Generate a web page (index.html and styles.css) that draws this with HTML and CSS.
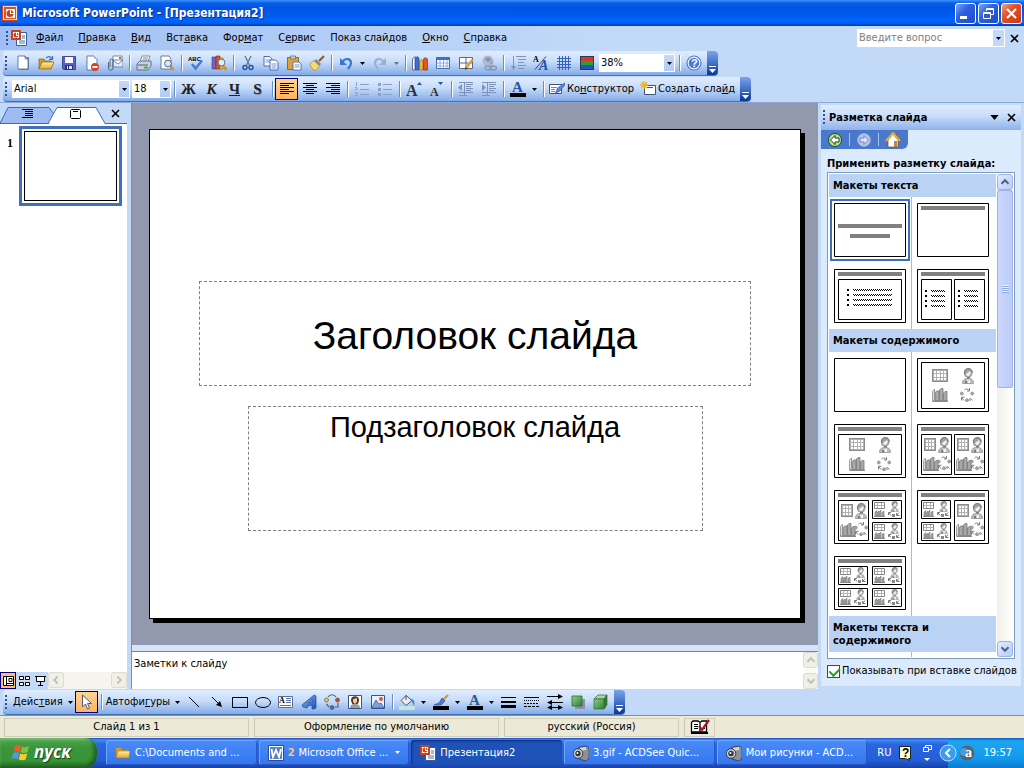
FILE: index.html
```html
<!DOCTYPE html>
<html lang="ru">
<head>
<meta charset="utf-8">
<title>Microsoft PowerPoint - [Презентация2]</title>
<link rel="stylesheet" href="styles.css">
</head>
<body>
<svg class="defs" aria-hidden="true">
  <defs>
    <linearGradient id="gGreen" x1="0" y1="0" x2="1" y2="1"><stop offset="0" stop-color="#8fd08a"/><stop offset="1" stop-color="#2f7d35"/></linearGradient>
    <linearGradient id="gFolder" x1="0" y1="0" x2="0" y2="1"><stop offset="0" stop-color="#fff0a0"/><stop offset="1" stop-color="#e0a52c"/></linearGradient>
    <linearGradient id="gBlue" x1="0" y1="0" x2="1" y2="1"><stop offset="0" stop-color="#8fb4f5"/><stop offset="1" stop-color="#1a4fb5"/></linearGradient>
    <symbol id="ppt" viewBox="0 0 16 16"><path fill="#c8421c" d="M0 0h16v16H0z"/><path fill="#f7d9cc" d="M1 1h14v14H1z"/><path fill="#d4552c" d="M2 2h12v12H2z"/><path fill="#fff" d="M4 4h9v9H4z"/><circle cx="8" cy="8.500" r="3.500" fill="#c8421c"/><path fill="#fff" d="M8 5h1v3h3v1H8z"/></symbol>
    <symbol id="pptdoc" viewBox="0 0 16 16"><path fill="#fff" stroke="#3b5c94" d="M5.500 2.500h10v13h-10z"/><path stroke="#4a70b5" d="M11 6h3M11 8h3M8 11h6M8 13h6"/><path fill="#c8421c" d="M0 0h10v10H0z"/><path fill="#fff" d="M2 2h6v6H2z"/><circle cx="5" cy="5" r="2.500" fill="#c8421c"/><path fill="#fff" d="M5 2h1v3h2v1H5z"/></symbol>
    <symbol id="new" viewBox="0 0 16 16"><path fill="#7286a8" d="M4 2h10v13H4z"/><path fill="#fff" stroke="#4a628c" stroke-width=".8" d="M3 1h7l3 3v10H3z"/><path fill="#a9c3ea" stroke="#4a628c" stroke-width=".6" d="M10 1v3h3z"/></symbol>
    <symbol id="open" viewBox="0 0 16 16"><path fill="#d49a2a" stroke="#8a5f12" stroke-width=".7" d="M1 14V4h5l1 2h6v2"/><path fill="url(#gFolder)" stroke="#8a5f12" stroke-width=".7" d="M1 14 4 7h12l-3 7z"/><path fill="none" stroke="#3d6fc4" stroke-width="1.300" d="M8 3c2-2 4-2 6 1M14.500 1v3.300H11"/></symbol>
    <symbol id="save" viewBox="0 0 16 16"><path fill="#5a62c0" stroke="#2c327e" stroke-width=".8" d="M1.500 1.500h13v13h-12l-1-1z"/><path fill="#f3f5ff" d="M4 2h8v6H4z"/><path fill="#2c327e" d="M4 10h8v5H4z"/><path fill="#dfe4fa" d="M6 11h5v3H6z"/><path fill="#2c327e" d="M7 11h1v3H7z"/></symbol>
    <symbol id="perm" viewBox="0 0 16 16"><path fill="#fff" stroke="#4a628c" stroke-width=".8" d="M3 1h7l3 3v11H3z"/><path fill="#a9c3ea" d="M10 1v3h3z"/><circle cx="11" cy="12" r="4" fill="#d9401f"/><path fill="#fff" d="M8.500 11h5v2h-5z"/></symbol>
    <symbol id="mail" viewBox="0 0 16 16"><path fill="#fff" stroke="#5a6f98" stroke-width=".8" d="M6 1h9v10H6z"/><path fill="#dce8fb" stroke="#5a6f98" stroke-width=".8" d="M6 5h10v7H6zM6 5l5 4 5-4"/><path fill="#d9603c" d="M12 2h2v2h-2z"/><path fill="none" stroke="#5c6780" d="M1.500 7v6a2 2 0 0 0 4.500 0V5.500a1.500 1.500 0 0 0-3 0V12"/></symbol>
    <symbol id="print" viewBox="0 0 16 16"><path fill="#fff" stroke="#6a7591" stroke-width=".8" d="M6 1h8l-2 6H4z"/><path fill="#c9cfdc" stroke="#4f5870" stroke-width=".8" d="M1 9l3-3h11v5l-3 4H1z"/><path fill="#8f98ab" d="M1 9h11v2H1z"/><path fill="#44b52e" d="M8 11.500h4v2H8z"/><path stroke="#7a87a3" d="M7 3h5M6.500 5h5"/></symbol>
    <symbol id="preview" viewBox="0 0 16 16"><path fill="#fff" stroke="#4a628c" stroke-width=".8" d="M2 1h8l2 3v10H2z"/><path stroke="#d48a28" stroke-width="2.200" d="m11.500 11 3 4"/><circle cx="9" cy="8.500" r="3.400" fill="#d5e6fb" stroke="#59657c"/></symbol>
    <symbol id="spell" viewBox="0 0 16 16"><text x="0" y="6" class="tiny">ABC</text><path fill="none" stroke="#4b7bd2" stroke-width="2.500" d="m4 9 3.500 4.500L14 5.500"/></symbol>
    <symbol id="research" viewBox="0 0 16 16"><path fill="#7a62b8" stroke="#473780" stroke-width=".6" d="M1 2h4v12H1z"/><path fill="#c2574a" stroke="#7a2b20" stroke-width=".6" d="M5 1h4v13H5z"/><path fill="#e6c55a" stroke="#8a6a12" stroke-width=".6" d="M9 3h3v11H9z"/><path stroke="#d48a28" stroke-width="2.200" d="m12.500 11 3 4"/><circle cx="10.500" cy="7.500" r="3.400" fill="#e3effc" stroke="#6d6d77"/></symbol>
    <symbol id="cut" viewBox="0 0 16 16"><path fill="none" stroke="#6c7c99" stroke-width="1.400" d="M5 1l4.500 9M11 1 6.500 10"/><circle cx="5" cy="12.500" r="2" fill="none" stroke="#2d57a8" stroke-width="1.500"/><circle cx="11" cy="12.500" r="2" fill="none" stroke="#2d57a8" stroke-width="1.500"/></symbol>
    <symbol id="copy" viewBox="0 0 16 16"><path fill="#fff" stroke="#3c5fa5" stroke-width=".9" d="M1 1.500h5.500L9 4v7H1z"/><path stroke="#6d93d8" d="M2.500 5h5M2.500 7h5"/><path fill="#fff" stroke="#3c5fa5" stroke-width=".9" d="M7 5h5.500L15 7.500V15H7z"/><path stroke="#6d93d8" d="M8.500 9h5M8.500 11h5M8.500 13h5"/></symbol>
    <symbol id="paste" viewBox="0 0 16 16"><path fill="#e0a236" stroke="#7c5512" stroke-width=".8" d="M1.500 2.500h11v12h-11z"/><path fill="#c8ccd4" stroke="#5b6472" stroke-width=".7" d="M4.500 1h5v3h-5z"/><path fill="#fff" stroke="#3c5fa5" stroke-width=".8" d="M7 7h6l2 2v6H7z"/><path stroke="#6d93d8" d="M8.500 10h5M8.500 12h5"/></symbol>
    <symbol id="brush" viewBox="0 0 16 16"><path stroke="#8a5b27" stroke-width="2.200" d="m10 6 5-5"/><path fill="#7d859a" d="m7 4 5 5-2 2-6-4z"/><path fill="#f3dc6c" stroke="#a5852a" stroke-width=".7" d="M5 5.500 10.500 11 7 15.500C4 15 1 12 1 8.500z"/></symbol>
    <symbol id="undo" viewBox="0 0 16 16"><path fill="none" stroke="#3e74d4" stroke-width="2.200" d="M4 7c4-5 9-3 9 1 0 3-2 4-3 6"/><path fill="#3e74d4" d="M2 3v7h7z"/></symbol>
    <symbol id="redo" viewBox="0 0 16 16"><path fill="none" stroke="#9db0d2" stroke-width="2.200" d="M12 7C8 2 3 4 3 8c0 3 2 4 3 6"/><path fill="#9db0d2" d="M14 3v7H7z"/></symbol>
    <symbol id="chart" viewBox="0 0 16 16"><path fill="#fff" stroke="#40527c" stroke-width=".8" d="M.5 4 3 1.500V15H.5z"/><path fill="#3f6fd0" stroke="#22407e" stroke-width=".6" d="M3.500 3 5 1.500 7 3v12H3.500z"/><path fill="#f0b62c" stroke="#8a5f12" stroke-width=".6" d="M7.500 6 9 4.500 11 6v9H7.500z"/><path fill="#e2552c" stroke="#7d2410" stroke-width=".6" d="M11.500 4 13 2.500 15.500 4v11h-4z"/></symbol>
    <symbol id="table" viewBox="0 0 16 16"><path fill="#fff" stroke="#3c64b0" d="M1.500 2.500h13v11h-13z"/><path fill="#3c6fd0" d="M1 2h14v3H1z"/><path stroke="#7c9ad6" stroke-width=".8" d="M5 5v9M8.500 5v9M12 5v9M1 8h14M1 11h14"/></symbol>
    <symbol id="borders" viewBox="0 0 16 16"><path fill="#fff" stroke="#5a6684" d="M1.500 2.500h13v11h-13z"/><path stroke="#5a6684" d="M8 2v12M1 8h14"/><path stroke="#e4a038" stroke-width="2.600" d="m14.500 4.500-6 8"/><path fill="#483010" d="m7 15 .5-3 2 1.500z"/></symbol>
    <symbol id="link" viewBox="0 0 16 16"><circle cx="7" cy="6" r="5.500" fill="#b0bbd0"/><path fill="#8797b5" d="M4 3l4-1 2 3-2 2-3-1zM9 8l3-2-1 4z"/><ellipse cx="7.500" cy="13" rx="3.500" ry="2" fill="none" stroke="#8797b5" stroke-width="1.300"/><ellipse cx="12" cy="13" rx="3.500" ry="2" fill="none" stroke="#8797b5" stroke-width="1.300"/></symbol>
    <symbol id="expand" viewBox="0 0 16 16"><path stroke="#8295b8" d="M3.500 1v12M6 1.500h10M8 4.500h8M8 7.500h6M8 10.500h8M8 13.500h6"/><path fill="#8295b8" d="M1 11h5l-2.500 4z"/></symbol>
    <symbol id="format" viewBox="0 0 16 16"><text x="0" y="7" class="glyph7">A</text><text x="6" y="15" class="glyphA">A</text><path stroke="#38456a" d="M2 14.500 13 1.500"/></symbol>
    <symbol id="grid" viewBox="0 0 16 16"><path stroke="#3460c0" stroke-width="1" d="M3.500 1v14M6.500 1v14M9.500 1v14M12.500 1v14M1 3.500h14M1 6.500h14M1 9.500h14M1 12.500h14"/></symbol>
    <symbol id="colors" viewBox="0 0 16 16"><path fill="#24386c" d="M1 1h14v14H1z"/><path fill="#e33322" d="M2 2h12v4H2z"/><path fill="#20a435" d="M2 6h12v4H2z"/><path fill="#2450c0" d="M2 10h12v4H2z"/></symbol>
    <symbol id="help" viewBox="0 0 16 16"><circle cx="8" cy="8" r="7" fill="#fff" stroke="#4a7ad8" stroke-width="1.200"/><circle cx="8" cy="8" r="5.300" fill="#4a7ad8"/><text x="5" y="12" class="qmark">?</text></symbol>
    <symbol id="al" viewBox="0 0 16 16"><path stroke="#000" d="M1 2.500h14M1 4.500h9M1 6.500h14M1 8.500h9M1 10.500h14M1 12.500h9"/></symbol>
    <symbol id="ac" viewBox="0 0 16 16"><path stroke="#000" d="M1 2.500h14M4 4.500h8M1 6.500h14M4 8.500h8M1 10.500h14M4 12.500h8"/></symbol>
    <symbol id="ar" viewBox="0 0 16 16"><path stroke="#000" d="M1 2.500h14M6 4.500h9M1 6.500h14M6 8.500h9M1 10.500h14M6 12.500h9"/></symbol>
    <symbol id="nums" viewBox="0 0 16 16"><path fill="none" stroke="#8fa0c0" d="M6 3.500h9M6 8.500h9M6 13.500h9M2.500 1v4M1 6.500h2v2H1M1 11.500h2v3H1"/></symbol>
    <symbol id="bullets" viewBox="0 0 16 16"><path stroke="#8fa0c0" d="M6 3.500h9M6 8.500h9M6 13.500h9"/><path fill="#8fa0c0" d="M1 2h3v3H1zM1 7h3v3H1zM1 12h3v3H1z"/></symbol>
    <symbol id="bigA" viewBox="0 0 16 16"><text x="0" y="15" class="serif16">A</text><path fill="#2450a8" d="M11 4l2.500-3L16 4z"/></symbol>
    <symbol id="smallA" viewBox="0 0 16 16"><text x="1" y="15" class="serif12">A</text><path fill="#2450a8" d="M9 1h5l-2.500 3z"/></symbol>
    <symbol id="outdent" viewBox="0 0 16 16"><path stroke="#7f93ba" d="M1 1.500h14M8 3.500h7M8 5.500h5M8 7.500h7M8 9.500h5M1 11.500h14M6.500 1v14M1 14.500h8"/><path fill="#7f93ba" d="M0 6.500 4 3v7z"/></symbol>
    <symbol id="indent" viewBox="0 0 16 16"><path stroke="#7f93ba" d="M1 1.500h14M8 3.500h7M8 5.500h5M8 7.500h7M8 9.500h5M1 11.500h14M6.500 1v14M1 14.500h8"/><path fill="#7f93ba" d="M5 6.500 1 3v7z"/></symbol>
    <symbol id="fontcolor" viewBox="0 0 16 16"><text x="2" y="11" class="serifBlue">A</text><path d="M0 12h16v4H0z"/></symbol>
    <symbol id="design" viewBox="0 0 16 16"><path fill="#fff" stroke="#40527c" d="M.5 3.500h12v9H.5z"/><path stroke="#7088b8" d="M2 6.500h6M2 8.500h4M2 10.500h4"/><path fill="#5a8ae0" stroke="#274a94" stroke-width=".6" d="m15.500 2-7 5-2 5 4-1.500 5-6z"/></symbol>
    <symbol id="newslide" viewBox="0 0 16 16"><path fill="#fff" stroke="#40527c" d="M4.500 4.500h11v9h-11z"/><path stroke="#40527c" d="M7 6.500h6"/><path stroke="#eeb91e" stroke-width="1.300" d="M4 0v8M0 4h8M1 1l6 6M7 1 1 7"/></symbol>
    <symbol id="person" viewBox="0 0 12 16"><path fill="#a0a0a0" d="M2 5c0-6.500 8.500-6 8.500-.5C10.500 8 9 9.500 6 9.500S2 8 2 5z"/><path fill="none" stroke="#6e6e6e" d="M2.500 6C2 1 5 .5 7 .7c2.500.3 3.500 2 3 4.300"/><path fill="#f0f0f0" d="m4 6 4-3 1 2-2 3H5z"/><path fill="#bcbcbc" stroke="#8c8c8c" stroke-width=".7" d="M.5 15.500c0-4 2-5 5.500-5s5.500 1 5.500 5z"/><path fill="#f4f4f4" d="m5 11 1.500 1.500L8 11v4H6z"/><path fill="#7c7c7c" d="M3 13h2v2.500H3zM5 9h3v1.500H5z"/></symbol>
    <symbol id="gtable" viewBox="0 0 16 13"><path fill="#8c8c8c" d="M0 0h16v13H0z"/><path fill="#b0b0b0" d="M1 1h14v11H1z"/><path fill="#fff" d="M2 2h2v2H2zM5 2h3v2H5zM9 2h2v2H9zM12 2h2v2h-2zM2 5h2v3H2zM5 5h3v3H5zM9 5h2v3H9zM12 5h2v3h-2zM2 9h2v2H2zM5 9h3v2H5zM9 9h2v2H9zM12 9h2v2h-2z"/></symbol>
    <symbol id="gtablen" viewBox="0 0 12 13"><path fill="#8c8c8c" d="M0 0h12v13H0z"/><path fill="#b0b0b0" d="M1 1h10v11H1z"/><path fill="#fff" d="M2 2h2v2H2zM5 2h2v2H5zM8 2h2v2H8zM2 5h2v3H2zM5 5h2v3H5zM8 5h2v3H8zM2 9h2v2H2zM5 9h2v2H5zM8 9h2v2H8z"/></symbol>
    <symbol id="gchart" viewBox="0 0 16 14"><path fill="#e0e0e0" stroke="#8a8a8a" stroke-width=".8" d="M.5 3.500 2.500 1v11l-2 1.500z"/><path fill="#a8a8a8" stroke="#787878" stroke-width=".8" d="M3 5l1.500-2H7v9.500H3zM7.500 2 9 .5h2v12H7.500zM11.500 5 13 3.500h2v9h-3.500z"/><path fill="#888" d="M1 12.500h15V14H1z"/></symbol>
    <symbol id="gdiag" viewBox="0 0 14 14"><g fill="#a8a8a8" stroke="#808080" stroke-width=".6"><circle cx="1.800" cy="5.500" r="1.500"/><circle cx="12.200" cy="5.500" r="1.500"/><circle cx="7" cy="12.200" r="1.500"/></g><path fill="none" stroke="#707070" stroke-width=".9" d="M4.500 2C6 .5 7.500.8 9 2.500M9.500 0v3H7M12.500 12.500l-2-2M10 13v-3M1.500 12.500V9.300h3M2 10l2 2.500"/></symbol>
    <symbol id="quad" viewBox="0 0 48 36"><use href="#gtable" x="1" y="1" width="16" height="13"/><use href="#person" x="31" y="0" width="12" height="16"/><use href="#gchart" x="1" y="20" width="16" height="14"/><use href="#gdiag" x="29" y="20" width="14" height="14"/></symbol>
    <symbol id="tall" viewBox="0 0 31 41"><path fill="#fff" stroke="#000" d="M.5.5h30v40H.5z"/><use href="#gtablen" x="3" y="4" width="12" height="13"/><use href="#person" x="17" y="3" width="12" height="16"/><use href="#gchart" x="2" y="23" width="16" height="14"/><use href="#gdiag" x="16" y="22" width="14" height="14"/></symbol>
    <symbol id="small" viewBox="0 0 30 19"><path fill="#fff" stroke="#000" d="M.5.5h29v18H.5z"/><path fill="none" stroke="#858585" d="M2.500 2.500h10v6h-10z"/><path stroke="#b4b4b4" d="M5.500 3v5M9.500 3v5M3 5.500h9"/><path fill="#a4a4a4" stroke="#787878" stroke-width=".6" d="M3 12l2-1.500V16H3zM5.500 12.500 7 11v5H5.500zM7.500 11.500 9 10v6H7.500zM10 12.500l2-1.500v5h-2z"/><path fill="#888" d="M2 16h11v1H2z"/><use href="#person" x="18" y="1" width="9" height="11"/><path fill="none" stroke="#777" d="M16.500 15v-2.500H19M17 13l2 2.500M27 12.500l-2 2.500M24.500 13v2.500h3"/><path fill="#888" d="M20 14h3v3h-3z"/></symbol>
    <symbol id="frame" viewBox="0 0 72 54"><path fill="#fff" stroke="#000" d="M.5.5h71v53H.5z"/></symbol>
    <symbol id="framed" viewBox="0 0 72 54"><use href="#frame" width="72" height="54"/><path fill="#808080" d="M4 3h64v4H4z"/></symbol>
    <symbol id="diag" viewBox="0 0 16 16"><g stroke="#333" stroke-width=".5"><circle cx="2.500" cy="6" r="2" fill="#f0c848"/><circle cx="13.500" cy="6" r="2" fill="#d84828"/><circle cx="8" cy="13.500" r="2" fill="#4870d0"/></g><path fill="none" stroke="#506080" stroke-width="1.200" d="M4 3c2-3 6-3 8 0M14 9v4h-3M5 13 2.500 10"/></symbol>
    <symbol id="down" viewBox="0 0 5 3"><path d="M0 0h5L2.500 3z"/></symbol>
    <symbol id="x" viewBox="0 0 9 9"><path stroke="#000" stroke-width="1.700" d="m1 1 7 7M8 1 1 8"/></symbol>
    <symbol id="chev" viewBox="0 0 16 16"><path fill="none" stroke="currentColor" stroke-width="2.300" d="m4 10 4-4 4 4"/></symbol>
    <symbol id="acd" viewBox="0 0 16 16"><path fill="#8c9098" stroke="#222" stroke-width=".6" d="m6 2 8-1 2 2v10l-3 3-7-2z"/><path fill="#d4d8de" d="m7 3 6-1v3L7 6z"/><circle cx="5" cy="8.500" r="4.800" fill="#c6cad0" stroke="#222" stroke-width=".8"/><circle cx="5" cy="8.500" r="2.700" fill="#333"/><circle cx="4.500" cy="8" r="1" fill="#fff"/></symbol>
  </defs>
</svg>

<header class="titlebar">
  <svg class="i16"><use href="#ppt"/></svg>
  <h1>Microsoft PowerPoint - [Презентация2]</h1>
  <button class="win" aria-label="Свернуть"><svg viewBox="0 0 19 19"><path fill="#fff" d="M4 12h7v3H4z"/></svg></button>
  <button class="win" aria-label="Восстановить"><svg viewBox="0 0 19 19"><path fill="none" stroke="#fff" d="M7.500 7V4.500h7v6H12M7 5.500h7M4.500 8.500h7v6h-7zM4 9.500h7"/></svg></button>
  <button class="win red" aria-label="Закрыть"><svg viewBox="0 0 19 19"><path stroke="#fff" stroke-width="2.200" d="m5 5 9 9M14 5l-9 9"/></svg></button>
</header>

<nav class="menubar">
  <i class="grip"></i>
  <svg class="i16"><use href="#pptdoc"/></svg>
  <div class="menus">
    <button><u>Ф</u>айл</button><button><u>П</u>равка</button><button><u>В</u>ид</button><button>Вст<u>а</u>вка</button><button>Фор<u>м</u>ат</button><button>С<u>е</u>рвис</button><button>Показ слай<u>д</u>ов</button><button><u>О</u>кно</button><button><u>С</u>правка</button>
  </div>
  <div class="combo ask"><input type="text" placeholder="Введите вопрос" aria-label="Введите вопрос"><button class="drop" aria-label="Список вопросов"><svg><use href="#down"/></svg></button></div>
  <button class="plain" aria-label="Закрыть окно"><svg class="i9"><use href="#x"/></svg></button>
</nav>

<div class="toolbar">
  <i class="grip"></i>
  <button class="tb" aria-label="Создать"><svg><use href="#new"/></svg></button>
  <button class="tb" aria-label="Открыть"><svg><use href="#open"/></svg></button>
  <button class="tb" aria-label="Сохранить"><svg><use href="#save"/></svg></button>
  <button class="tb" aria-label="Разрешения"><svg><use href="#perm"/></svg></button>
  <button class="tb" aria-label="Сообщение"><svg><use href="#mail"/></svg></button>
  <i class="sep"></i>
  <button class="tb" aria-label="Печать"><svg><use href="#print"/></svg></button>
  <button class="tb" aria-label="Просмотр"><svg><use href="#preview"/></svg></button>
  <i class="sep"></i>
  <button class="tb" aria-label="Орфография"><svg><use href="#spell"/></svg></button>
  <button class="tb" aria-label="Справочные материалы"><svg><use href="#research"/></svg></button>
  <i class="sep"></i>
  <button class="tb" aria-label="Вырезать"><svg><use href="#cut"/></svg></button>
  <button class="tb" aria-label="Копировать"><svg><use href="#copy"/></svg></button>
  <button class="tb" aria-label="Вставить"><svg><use href="#paste"/></svg></button>
  <button class="tb" aria-label="Формат по образцу"><svg><use href="#brush"/></svg></button>
  <i class="sep"></i>
  <button class="tb" aria-label="Отменить"><svg><use href="#undo"/></svg></button>
  <button class="dd" aria-label="Список отмены"><svg><use href="#down"/></svg></button>
  <button class="tb" aria-label="Вернуть"><svg><use href="#redo"/></svg></button>
  <button class="dd dim" aria-label="Список возврата"><svg><use href="#down"/></svg></button>
  <i class="sep"></i>
  <button class="tb" aria-label="Диаграмма"><svg><use href="#chart"/></svg></button>
  <button class="tb" aria-label="Таблица"><svg><use href="#table"/></svg></button>
  <button class="tb" aria-label="Границы"><svg><use href="#borders"/></svg></button>
  <button class="tb" aria-label="Гиперссылка"><svg><use href="#link"/></svg></button>
  <i class="sep"></i>
  <button class="tb" aria-label="Развернуть все"><svg><use href="#expand"/></svg></button>
  <button class="tb" aria-label="Показать форматирование"><svg><use href="#format"/></svg></button>
  <button class="tb" aria-label="Сетка"><svg><use href="#grid"/></svg></button>
  <button class="tb" aria-label="Цвет"><svg><use href="#colors"/></svg></button>
  <div class="combo zoom"><select aria-label="Масштаб"><option>38%</option></select><svg class="arrow"><use href="#down"/></svg></div>
  <i class="sep"></i>
  <button class="tb" aria-label="Справка"><svg><use href="#help"/></svg></button>
  <button class="cap" aria-label="Параметры панели"><svg viewBox="0 0 7 7"><path fill="#fff" d="M0 0h7v1H0zM0 3h7L3.500 7z"/></svg></button>
</div>

<div class="toolbar">
  <i class="grip"></i>
  <div class="combo font"><select aria-label="Шрифт"><option>Arial</option></select><svg class="arrow"><use href="#down"/></svg></div>
  <div class="combo size"><select aria-label="Размер"><option>18</option></select><svg class="arrow"><use href="#down"/></svg></div>
  <i class="sep"></i>
  <button class="tb ltr">Ж</button><button class="tb ltr it">К</button><button class="tb ltr"><u>Ч</u></button><button class="tb ltr shade">S</button>
  <i class="sep"></i>
  <button class="tb on" aria-label="По левому краю"><svg><use href="#al"/></svg></button>
  <button class="tb" aria-label="По центру"><svg><use href="#ac"/></svg></button>
  <button class="tb" aria-label="По правому краю"><svg><use href="#ar"/></svg></button>
  <i class="sep"></i>
  <button class="tb" aria-label="Нумерация"><svg><use href="#nums"/></svg></button>
  <button class="tb" aria-label="Маркеры"><svg><use href="#bullets"/></svg></button>
  <i class="sep"></i>
  <button class="tb" aria-label="Увеличить шрифт"><svg><use href="#bigA"/></svg></button>
  <button class="tb" aria-label="Уменьшить шрифт"><svg><use href="#smallA"/></svg></button>
  <i class="sep"></i>
  <button class="tb" aria-label="Уменьшить отступ"><svg><use href="#outdent"/></svg></button>
  <button class="tb" aria-label="Увеличить отступ"><svg><use href="#indent"/></svg></button>
  <i class="sep"></i>
  <button class="tb" aria-label="Цвет текста"><svg><use href="#fontcolor"/></svg></button>
  <button class="dd" aria-label="Выбор цвета текста"><svg><use href="#down"/></svg></button>
  <i class="sep"></i>
  <button class="wide"><svg class="i16"><use href="#design"/></svg><span>Ко<u>н</u>структор</span></button>
  <button class="wide"><svg class="i16"><use href="#newslide"/></svg><span>Создать сла<u>й</u>д</span></button>
  <button class="cap" aria-label="Параметры панели"><svg viewBox="0 0 7 7"><path fill="#fff" d="M0 0h7v1H0zM0 3h7L3.500 7z"/></svg></button>
</div>

<main class="work">
  <aside class="outline">
    <div class="tabs">
      <svg viewBox="0 0 127 21"><path fill="#9ebcf3" stroke="#3f6bb5" d="M0 20.500 8 4.500h41l6 8-5 8z"/><path fill="#fff" stroke="#3f6bb5" d="M0 20.500h48l9-16h39l9 16h22"/><path fill="#fff" d="M50 20h54v1H50z"/></svg>
      <button aria-label="Структура"><svg viewBox="0 0 12 10"><path stroke="#000" d="M0 .5h11M3 2.500h8M3 4.500h8M3 6.500h8M0 8.500h11"/></svg></button>
      <button aria-label="Слайды"><svg viewBox="0 0 12 10"><path fill="#fff" stroke="#000" d="M1.500.5h8l1 1v7l-1 1h-8l-1-1v-7zM3 2.500h5"/></svg></button>
      <button aria-label="Закрыть область"><svg viewBox="0 0 9 9"><path stroke="#000" stroke-width="1.600" d="m1 1 7 7M8 1 1 8"/></svg></button>
    </div>
    <ol class="slides"><li><b>1</b><button aria-label="Слайд 1"><span></span></button></li></ol>
    <div class="views">
      <button class="on" aria-label="Обычный"><svg viewBox="0 0 16 16"><path fill="#fff" stroke="#000" d="M3.500 3.500h10v9h-10zM6.500 3v9M9 5.500h3v3H9zM7 10.500h6"/></svg></button>
      <button aria-label="Сортировщик"><svg viewBox="0 0 16 16"><path fill="#fff" stroke="#000" d="M3.500 3.500h4v3h-4zM9.500 3.500h4v3h-4zM3.500 9.500h4v3h-4zM9.500 9.500h4v3h-4z"/></svg></button>
      <button aria-label="Показ слайдов"><svg viewBox="0 0 16 16"><path fill="#fff" stroke="#000" d="M3 3.500h11M4.500 4v4.500h8V4M8.500 9v3M6 12.500h5"/></svg></button>
      <div class="hscroll"><button class="sb off" aria-label="Влево"><svg class="left"><use href="#chev"/></svg></button><button class="sb off" aria-label="Вправо"><svg class="right"><use href="#chev"/></svg></button></div>
    </div>
  </aside>

  <section class="center">
    <div class="canvas">
      <article class="slide">
        <div class="ph title">Заголовок слайда</div>
        <div class="ph sub">Подзаголовок слайда</div>
      </article>
    </div>
    <div class="notes">
      <textarea aria-label="Заметки к слайду">Заметки к слайду</textarea>
      <div class="vscroll"><button class="sb off" aria-label="Вверх"><svg><use href="#chev"/></svg></button><button class="sb off" aria-label="Вниз"><svg class="flip"><use href="#chev"/></svg></button></div>
    </div>
  </section>

  <aside class="pane">
    <div class="panehead"><i class="grip"></i><h2>Разметка слайда</h2><button class="plain" aria-label="Другие области"><svg class="tri"><use href="#down"/></svg></button><button class="plain" aria-label="Закрыть"><svg class="i9"><use href="#x"/></svg></button></div>
    <div class="panenav">
      <button aria-label="Назад"><svg viewBox="0 0 16 16"><circle cx="8" cy="8" r="6.500" fill="#b6e59a" stroke="#1c4a18"/><path fill="#fff" stroke="#1c3a10" d="M3.500 8 8 3.500v2.500h4v4H8v2.500z"/></svg></button><i></i>
      <button aria-label="Вперед"><svg viewBox="0 0 16 16"><circle cx="8" cy="8" r="6.500" fill="#b9c9ea" stroke="#8ea4d4"/><path fill="#dbe5f8" stroke="#6f86b8" d="M12.500 8 8 3.500v2.500H4v4h4v2.500z"/></svg></button><i></i>
      <button aria-label="Домой"><svg viewBox="0 0 16 16"><path fill="#fff" stroke="#6a4a20" stroke-width=".7" d="M3 8l5-6 5 6v7H3z"/><path fill="#d04c28" d="M11 1h2v4h-2z"/><path fill="none" stroke="#e8b030" stroke-width="2" d="m1 9 7-8 7 8"/><path fill="#c08838" d="M9 9h3v6H9z"/></svg></button>
    </div>
    <h3>Применить разметку слайда:</h3>
    <div class="listbox">
      <div class="list">
        <h4>Макеты текста</h4>
        <div class="cells">
          <div><button class="sel" aria-label="Титульный слайд"><svg viewBox="0 0 72 54"><use href="#frame"/><path fill="#808080" d="M4 21h64v4H4zM16 31h40v4H16z"/></svg></button></div>
          <div><button aria-label="Только заголовок"><svg viewBox="0 0 72 54"><use href="#framed"/></svg></button></div>
          <div><button aria-label="Заголовок и текст"><svg viewBox="0 0 72 54"><use href="#framed"/><path fill="#fff" stroke="#000" d="M4.500 10.500h63v40h-63z"/><path d="M13 20h2v2h-2zM13 25h2v2h-2zM13 30h2v2h-2zM13 35h2v2h-2z"/><path stroke="#000" stroke-dasharray="1 1" d="M19 20.500h39M19 25.500h39M19 30.500h39M19 35.500h39M20 21.500h38M20 26.500h38M20 31.500h38M20 36.500h38"/></svg></button></div>
          <div><button aria-label="Заголовок и текст в две колонки"><svg viewBox="0 0 72 54"><use href="#framed"/><path fill="#fff" stroke="#000" d="M4.500 10.500h30v40h-30zM37.500 10.500h30v40h-30z"/><path d="M8 21h2v2H8zM8 26h2v2H8zM8 31h2v2H8zM8 36h2v2H8zM41 21h2v2h-2zM41 26h2v2h-2zM41 31h2v2h-2zM41 36h2v2h-2z"/><path stroke="#000" stroke-dasharray="1 1" d="M14 21.500h14M14 26.500h14M14 31.500h14M14 36.500h14M15 22.500h14M15 27.500h14M15 32.500h14M15 37.500h14M47 21.500h14M47 26.500h14M47 31.500h14M47 36.500h14M48 22.500h14M48 27.500h14M48 32.500h14M48 37.500h14"/></svg></button></div>
        </div>
        <h4>Макеты содержимого</h4>
        <div class="cells">
          <div><button aria-label="Пустой слайд"><svg viewBox="0 0 72 54"><use href="#frame"/></svg></button></div>
          <div><button aria-label="Содержимое"><svg viewBox="0 0 72 54"><use href="#frame"/><path fill="#fff" stroke="#000" d="M4.500 4.500h63v46h-63z"/><use href="#quad" x="14" y="10" width="48" height="36"/></svg></button></div>
          <div><button aria-label="Заголовок и содержимое"><svg viewBox="0 0 72 54"><use href="#framed"/><path fill="#fff" stroke="#000" d="M4.500 10.500h63v40h-63z"/><use href="#quad" x="14" y="13" width="48" height="36"/></svg></button></div>
          <div><button aria-label="Заголовок и два объекта"><svg viewBox="0 0 72 54"><use href="#framed"/><use href="#tall" x="4" y="10" width="31" height="41"/><use href="#tall" x="37" y="10" width="31" height="41"/></svg></button></div>
          <div><button aria-label="Объект и два объекта"><svg viewBox="0 0 72 54"><use href="#framed"/><use href="#tall" x="4" y="10" width="31" height="41"/><use href="#small" x="38" y="10" width="30" height="19"/><use href="#small" x="38" y="32" width="30" height="19"/></svg></button></div>
          <div><button aria-label="Два объекта и объект"><svg viewBox="0 0 72 54"><use href="#framed"/><use href="#small" x="4" y="10" width="30" height="19"/><use href="#small" x="4" y="32" width="30" height="19"/><use href="#tall" x="37" y="10" width="31" height="41"/></svg></button></div>
          <div><button aria-label="Четыре объекта"><svg viewBox="0 0 72 54"><use href="#framed"/><use href="#small" x="4" y="10" width="30" height="19"/><use href="#small" x="4" y="32" width="30" height="19"/><use href="#small" x="38" y="10" width="30" height="19"/><use href="#small" x="38" y="32" width="30" height="19"/></svg></button></div>
          <div></div>
        </div>
        <h4>Макеты текста и содержимого</h4>
        <div class="cells"><div></div><div></div></div>
      </div>
      <div class="vscroll live"><button class="sb" aria-label="Вверх"><svg><use href="#chev"/></svg></button><div class="track"><div class="thumb"><i></i></div></div><button class="sb" aria-label="Вниз"><svg class="flip"><use href="#chev"/></svg></button></div>
    </div>
    <label class="check"><input type="checkbox" checked><span>Показывать при вставке слайдов</span></label>
  </aside>
</main>

<div class="toolbar draw">
  <i class="grip"></i>
  <button class="word"><span>Дейс<u>т</u>вия</span><svg><use href="#down"/></svg></button>
  <button class="tb on" aria-label="Выбор объектов"><svg viewBox="0 0 16 16"><path fill="#fff" stroke="#4a5a80" d="M4.500 1v12l3-3 2 5 2-1-2-4.500h4z"/></svg></button>
  <i class="sep"></i>
  <button class="word"><span>Автофи<u>г</u>уры</span><svg><use href="#down"/></svg></button>
  <button class="tb" aria-label="Линия"><svg viewBox="0 0 16 16"><path stroke="#000" d="m3 3 10 10"/></svg></button>
  <button class="tb" aria-label="Стрелка"><svg viewBox="0 0 16 16"><path stroke="#000" d="m3 3 8 8"/><path d="M13 13 7 11l4-4z"/></svg></button>
  <button class="tb" aria-label="Прямоугольник"><svg viewBox="0 0 16 16"><path fill="none" stroke="#000" d="M.5 3.500h15v10H.5z"/></svg></button>
  <button class="tb" aria-label="Овал"><svg viewBox="0 0 16 16"><ellipse cx="8" cy="8.500" rx="7.500" ry="5" fill="none" stroke="#000"/></svg></button>
  <button class="tb" aria-label="Надпись"><svg viewBox="0 0 16 16"><path fill="#fff" stroke="#5a6f98" d="M.5 2.500h14v11H.5z"/><text x="1" y="9" class="glyph7">A</text><path stroke="#5a6f98" d="M8 4.500h5M8 6.500h5M8 8.500h5M2 11.500h11"/></svg></button>
  <button class="tb" aria-label="WordArt"><svg viewBox="0 0 16 16"><path fill="url(#gBlue)" stroke="#1c4a9c" stroke-width=".7" d="M1 11 13 1l2 1v12l-2 1h-2v-4l-4 1-1 2-4-1zM8 9l3-1V5z"/></svg></button>
  <button class="tb" aria-label="Диаграмма"><svg><use href="#diag"/></svg></button>
  <button class="tb" aria-label="Картинка"><svg viewBox="0 0 16 16"><path fill="#fff" stroke="#34558f" d="M1.500 1.500h13v13h-13z"/><path fill="#46342c" d="M4 6c0-5 8-5 8 0 0 3-2 5-4 5S4 9 4 6z"/><path fill="#f2c79c" d="M6 5l4-1v4l-2 2-2-2z"/><path fill="#9c9c9c" d="M3 14c0-3 2-4 5-4s5 1 5 4z"/></svg></button>
  <button class="tb" aria-label="Рисунок"><svg viewBox="0 0 16 16"><path fill="#e8f1fe" stroke="#34558f" d="M1.500 1.500h13v13h-13z"/><path fill="#7fa0dc" stroke="#34558f" stroke-width=".7" d="m2 13 4-7 3 4 2-1 3 5H2z"/><circle cx="11" cy="5" r="2" fill="#e0522c"/></svg></button>
  <i class="sep"></i>
  <button class="tb" aria-label="Цвет заливки"><svg viewBox="0 0 16 16"><path fill="#bfe6e2" d="M0 12h16v4H0z"/><path fill="#e8ecf4" stroke="#46536e" d="m7 1.500 6 5-6 5-5-5z"/><path fill="none" stroke="#46536e" d="M7 6V1"/><path fill="#4c84dc" d="M12 5c3 0 4 2 3 7l-2-4z"/></svg></button>
  <button class="dd" aria-label="Выбор заливки"><svg><use href="#down"/></svg></button>
  <button class="tb" aria-label="Цвет линий"><svg viewBox="0 0 16 16"><path d="M0 12h16v4H0z"/><path stroke="#d89a34" stroke-width="2.400" d="m9 7 6-6"/><path fill="#4c7ed8" stroke="#24488c" stroke-width=".6" d="m9 4 3 3-4 4H1l5-2z"/></svg></button>
  <button class="dd" aria-label="Выбор цвета линий"><svg><use href="#down"/></svg></button>
  <button class="tb" aria-label="Цвет шрифта"><svg><use href="#fontcolor"/></svg></button>
  <button class="dd" aria-label="Выбор цвета шрифта"><svg><use href="#down"/></svg></button>
  <button class="tb" aria-label="Тип линии"><svg viewBox="0 0 16 16"><path d="M0 3h15v1H0zM0 7h15v2H0zM0 11h15v3H0z"/></svg></button>
  <button class="tb" aria-label="Тип штриха"><svg viewBox="0 0 16 16"><path stroke="#000" d="M0 3.500h15"/><path stroke="#000" stroke-dasharray="1 1" d="M0 6.500h15"/><path stroke="#000" stroke-dasharray="2 1" d="M0 9.500h15"/><path stroke="#000" stroke-dasharray="3 1" d="M0 12.500h15"/></svg></button>
  <button class="tb" aria-label="Вид стрелки"><svg viewBox="0 0 16 16"><path stroke="#000" d="M0 2.500h13M3 8.500h13M3 13.500h10"/><path d="M11 0l5 2.500L11 5zM5 6 0 8.500 5 11zM5 11l-5 2.500L5 16zM11 11l5 2.500-5 2.500z"/></svg></button>
  <button class="tb" aria-label="Тень"><svg viewBox="0 0 16 16"><path fill="#8a94a8" d="M5 5h10v10H5z"/><path fill="url(#gGreen)" stroke="#2b6a30" stroke-width=".8" d="M2 2h10v10H2z"/></svg></button>
  <button class="tb" aria-label="Объем"><svg viewBox="0 0 16 16"><path fill="#a5dba0" stroke="#2b6a30" stroke-width=".7" d="m1 5 4-4h9l-3 4z"/><path fill="#2f7d35" stroke="#2b6a30" stroke-width=".7" d="m11 5 3-4v10l-3 4z"/><path fill="url(#gGreen)" stroke="#2b6a30" stroke-width=".7" d="M1 5h10v10H1z"/></svg></button>
  <button class="cap" aria-label="Параметры панели"><svg viewBox="0 0 7 7"><path fill="#fff" d="M0 0h7v1H0zM0 3h7L3.500 7z"/></svg></button>
</div>

<footer class="status">
  <span>Слайд 1 из 1</span><span>Оформление по умолчанию</span><span class="lang">русский (Россия)</span>
  <span class="book"><svg viewBox="0 0 20 16"><path fill="#fff" stroke="#000" stroke-width="1.300" d="M1.500 3.500 3 2h5l2 1.500L12 2h4.500v11H11l-1 1-1-1H1.500zM10 3.500V13"/><path d="M1 13h17v2H1z"/><path stroke="#000" d="M4 5.500h4M4 7.500h4M4 9.500h4M12 9.500h3"/><path fill="none" stroke="#a01822" stroke-width="2.200" d="m9 7 3 4 7-10"/></svg></span>
</footer>

<footer class="taskbar">
  <button class="start"><svg viewBox="0 0 18 18"><path fill="#ee5a2a" d="M3 3c2-2 4-1 6 0L7.500 9c-2-1-4-1-6 0z"/><path fill="#7cc43c" d="M10 3.500c2 1 4 1 7-.5l-1.500 6c-2 1.500-5 1-7 0z"/><path fill="#5a94f0" d="M1.200 10c2-1 4-1 6 0l-1.500 6c-2-1-4-1-6 0z"/><path fill="#f8ca34" d="M8.200 10.500c2 1 4 1 7 0l-1.500 6c-2 1-5 1-7 0z"/></svg>пуск</button>
  <div class="tasks">
    <button><svg class="i16" viewBox="0 0 16 16"><path fill="#d49a2a" d="M1 13V3h5l1 2h6v8z"/><path fill="url(#gFolder)" stroke="#a87818" stroke-width=".6" d="M1 13 3 6h12l-1 7z"/></svg><span>C:\Documents and ...</span></button>
    <button><svg class="i16" viewBox="0 0 16 16"><path fill="#fff" stroke="#2a4c90" d="M.5.5h15v15H.5z"/><path fill="#5880c8" d="M2 2h12v12H2z"/><path fill="none" stroke="#fff" stroke-width="1.800" d="m3.500 4 1.500 8 3-7 3 7 2-8"/></svg><em>2</em><span>Microsoft Office ...</span><svg class="more"><use href="#down"/></svg></button>
    <button class="active"><svg class="i16"><use href="#pptdoc"/></svg><span>Презентация2</span></button>
    <button><svg class="i16"><use href="#acd"/></svg><span>3.gif - ACDSee Quic...</span></button>
    <button><svg class="i16"><use href="#acd"/></svg><span>Мои рисунки - ACD...</span></button>
  </div>
  <div class="langbar"><span>RU</span><svg class="i16" viewBox="0 0 16 16"><path fill="#fffbd0" stroke="#222" d="M2.500 1.500h11v12h-2l1 2-4-2h-6z"/><text x="5" y="12" class="qblack">?</text></svg><svg class="i16" viewBox="0 0 16 16"><path fill="none" stroke="#fff" d="M6.500 3V.5h6v4H10M4.500 2.500h5v4h-5z"/><path fill="#fff" d="M5 13h6l-3 3z"/></svg></div>
  <div class="tray"><button aria-label="Показать значки"><svg viewBox="0 0 18 18"><circle cx="9" cy="9" r="8" fill="#3a9cf0" stroke="#b8e0ff"/><path fill="none" stroke="#fff" stroke-width="2" d="m11 5-4 4 4 4"/></svg></button><svg viewBox="0 0 16 16"><circle cx="8" cy="8" r="7.500" fill="#566474"/><circle cx="5" cy="7" r="4" fill="#4a9ae0"/><text x="6" y="12" class="traya">a</text></svg><time>19:57</time></div>
</footer>
</body>
</html>
```
FILE: styles.css
```css
* { box-sizing: border-box; }
body {
  margin: 0; height: 100vh; overflow: hidden;
  display: flex; flex-direction: column;
  background: #c3d9f8; color: #000;
  font: 11px/14px "DejaVu Sans Condensed", "Noto Sans", sans-serif;
}
button, input, select, textarea { font: inherit; color: inherit; }
button { border: 0; padding: 0; background: none; display: flex; align-items: center; justify-content: center; white-space: nowrap; }
h1, h2, h3, h4, ol { margin: 0; padding: 0; font-size: 11px; }
svg { flex: none; display: block; }
.defs { position: absolute; width: 0; height: 0; }
.i16 { width: 16px; height: 16px; }
.i9 { width: 9px; height: 9px; }
.tiny { font: bold 6px "Liberation Sans", sans-serif; }
.glyph7 { font: bold 8px "Liberation Serif", serif; }
.glyphA { font: italic bold 14px "Liberation Serif", serif; fill: #2450a8; }
.serif16 { font: bold 16px "Liberation Serif", serif; fill: #333; }
.serif12 { font: bold 12px "Liberation Serif", serif; fill: #333; }
.serifBlue { font: bold 15px "Liberation Serif", serif; fill: #2d56a0; }
.qmark { font: bold 11px "Liberation Sans", sans-serif; fill: #fff; }
.qblack { font: bold 12px "Liberation Sans", sans-serif; }
.traya { font: bold 14px "Liberation Serif", serif; fill: #fff; }

.titlebar {
  height: 26px; flex: none; display: flex; align-items: center; gap: 2px; padding: 0 2px 0 2px;
  background: linear-gradient(#3a93ff 0, #0a5fe8 3px, #0054e3 8px, #0058ec 14px, #0265fc 20px, #0260f4 23px, #003cb0 26px);
}
.titlebar h1 { flex: 1; margin-left: 2px; color: #fff; font-size: 12px; line-height: 16px; text-shadow: 1px 1px #0a2f8a; }
.win { width: 21px; height: 21px; border: 1px solid #fff; border-radius: 3px; background: linear-gradient(135deg, #7ea6f5, #2f62de 40%, #1e4bd0); }
.win svg { width: 19px; height: 19px; }
.win.red { background: linear-gradient(135deg, #f0a088, #e0502c 40%, #c43a14); }

.menubar { height: 24px; flex: none; display: flex; align-items: center; padding: 0 0 0 5px; background: linear-gradient(90deg, #9ebef5, #c3d9f8 60%); }
.menus { flex: 1; display: flex; padding-left: 2px; }
.menus button { padding: 2px 8px 2px 7px; }
.grip { width: 7px; height: 15px; flex: none; background: repeating-linear-gradient(#33508f 0 2px, transparent 2px 4px) 1px 0 / 2px 15px no-repeat; }
.menubar .grip { width: 6px; }
.plain svg { margin: 0 auto; }
.menubar .plain { width: 19px; }

.combo { position: relative; display: flex; background: #fff; height: 18px; }
.combo select { appearance: none; flex: 1; width: 100%; border: 0; border-radius: 0; padding: 0 0 0 2px; outline: 0; background: linear-gradient(#c3d9f8, #b2cbf3) right 1px center / 10px 16px no-repeat #fff; }
.combo .arrow { position: absolute; right: 3px; top: 8px; pointer-events: none; }
.arrow, .drop svg, .dd svg, .word svg, .more { width: 5px; height: 3px; }
.combo input { flex: 1; min-width: 0; border: 0; padding: 0 2px; background: #fff; }
.combo input::placeholder { color: #808080; opacity: 1; }
.drop { width: 11px; margin: 1px; background: #c3d9f8; }
.ask { width: 148px; }
.zoom { width: 76px; margin: 0 1px; }
.font { width: 118px; margin-left: 1px; }
.size { width: 39px; margin-left: 2px; }

.toolbar {
  height: 25px; flex: none; align-self: flex-start; display: flex; align-items: center; margin: 1px 0 0 3px; padding-left: 1px;
  border-radius: 4px; border-bottom: 1px solid #4472b8; background: linear-gradient(#e1edfd, #c6dcfa 45%, #83abe8);
}
.sep { width: 6px; height: 16px; flex: none; background: linear-gradient(90deg, #6a8ccb 1px, #fff 1px) 3px 0 / 2px 16px no-repeat; }
.tb { width: 23px; height: 22px; }
.tb svg { width: 16px; height: 16px; }
.tb.on { border: 1px solid #000080; background: linear-gradient(#ffd48e, #fdb264); }
.dd { width: 11px; height: 22px; }
.dim { opacity: .45; }
.ltr { font: bold 15px/18px "Liberation Serif", serif; color: #222; }
.it { font-style: italic; }
.shade { text-shadow: 1px 1px #8090b0; }
.wide { padding: 0 3px; gap: 2px; }
.cap { width: 11px; height: 24px; margin-left: 2px; align-items: flex-end; padding-bottom: 2px; border-radius: 0 4px 4px 0; background: linear-gradient(#7aa4ec, #3d6cc4 55%, #0c3594); }
.cap svg { width: 7px; height: 7px; }
.word { padding: 0 2px; gap: 5px; height: 22px; }

.work { flex: 1; min-height: 0; display: flex; border-top: 1px solid #8aa8d8; }
.outline { width: 127px; flex: none; display: flex; flex-direction: column; background: #fff; }
.tabs { position: relative; height: 21px; display: grid; grid-template-columns: 55px 41px 1fr; background: #c3d9f8; }
.tabs > svg { position: absolute; inset: 0; width: 100%; height: 21px; }
.tabs button { position: relative; }
.tabs button svg { width: 12px; height: 10px; }
.tabs button:last-child { padding-left: 8px; }
.tabs button:last-child svg { width: 9px; height: 9px; }
.slides { flex: 1; list-style: none; padding: 2px 5px; }
.slides li { display: flex; }
.slides b { width: 14px; padding: 10px 0 0 2px; font: bold 12px/14px "Liberation Serif", serif; }
.slides button { flex: 1; height: 80px; border: 3px solid #4070c0; padding: 2px; }
.slides span { width: 100%; height: 100%; border: 1px solid #000; background: #fff; }
.views { height: 17px; display: flex; background: #c3d9f8; }
.views > button { width: 16px; height: 17px; }
.views > button svg { width: 16px; height: 16px; }
.views .on { border: 1px solid #000080; background: #fdbd74; }
.hscroll { flex: 1; display: flex; justify-content: space-between; background: #f5f4ee; }
.sb { width: 16px; height: 16px; flex: none; border: 1px solid #fff; border-radius: 3px; color: #4d6185; background: linear-gradient(135deg, #e1eaff, #b9cbf8); }
.sb svg { width: 14px; height: 14px; }
.sb.off { color: #c3c2b6; border-color: #dddcd0; background: #f1f0e8; }
.left { transform: rotate(-90deg); }
.right { transform: rotate(90deg); }
.flip { transform: rotate(180deg); }

.center { flex: 1; min-width: 0; display: flex; flex-direction: column; margin: 0 0 0 5px; box-shadow: -1px 0 #6f93d0; }
.canvas { flex: 1; min-height: 0; display: flex; padding: 26px 17px; background: #9299ae; }
.slide { flex: 1; border: 1px solid #000; background: #fff; box-shadow: 4px 4px #000; padding-top: 151px; font-family: "Liberation Sans", sans-serif; text-align: center; }
.ph { margin: 0 auto; border: 1px dashed #808080; }
.title { width: 85%; height: 105px; font-size: 39px; line-height: 108px; }
.sub { width: 70%; height: 125px; margin-top: 20px; font-size: 29px; line-height: 40px; }
.notes { height: 44px; flex: none; display: flex; border-top: 6px solid #d5e4fa; box-shadow: inset 0 1px #5f86cc; background: #fff; padding-top: 1px; }
.notes textarea { flex: 1; resize: none; overflow: hidden; border: 0; outline: 0; padding: 5px 2px; background: transparent; }
.vscroll { width: 15px; display: flex; flex-direction: column; justify-content: space-between; background: #fcfbf8; }
.vscroll .sb { width: 15px; }

.pane { width: 200px; flex: none; display: flex; flex-direction: column; margin: 2px 3px 3px 3px; background: #dceafd; }
.panehead { height: 25px; flex: none; display: flex; align-items: center; padding: 0 1px; background: linear-gradient(#e1edfd, #c6dcfa 45%, #8fb2ea); }
.panehead h2 { flex: 1; }
.panehead .plain { width: 17px; }
.tri { width: 9px; height: 5px; }
.panenav { height: 19px; flex: none; align-self: flex-start; display: flex; align-items: center; gap: 5px; padding: 0 7px 0 6px; border-radius: 0 0 6px 0; background: #4a78cc; }
.panenav svg { width: 16px; height: 16px; }
.panenav i { width: 1px; height: 13px; margin: 0 1px; background: #a9c4f2; }
.pane h3 { padding: 8px 0 1px 6px; white-space: nowrap; }
.listbox { flex: 1; min-height: 0; margin: 0 6px; display: flex; border: 1px solid #7f9db9; padding: 1px; background: #fff; }
.list { flex: 1; overflow: hidden; display: flex; flex-direction: column; }
.list h4 { padding: 5px 4px 4px; font-size: 11px; line-height: 14px; background: #bad2f4; flex: none; }
.list h4:nth-of-type(3) { padding: 5px 4px; line-height: 13px; }
.cells { flex: none; display: grid; grid-template-columns: 83px 1fr; }
.cells > div { height: 66px; padding: 2px 0 0 1px; }
.cells > div:nth-child(odd) { border-right: 1px solid #b8b8b8; }
.cells button { width: 80px; height: 62px; }
.cells svg { width: 72px; height: 54px; }
.sel { border: 2px solid #3c6ebe; }
.vscroll.live { width: 16px; margin: 0 0 0 1px; background: linear-gradient(90deg, #f1f0e8, #fff); }
.vscroll.live .sb { width: 16px; border-color: #9db4ea; }
.track { flex: 1; }
.thumb { height: 44%; display: flex; align-items: center; justify-content: center; border: 1px solid #9db4ea; border-radius: 2px; background: linear-gradient(90deg, #cbd8fd, #bccbfa); }
.thumb i { width: 7px; height: 8px; background: repeating-linear-gradient(#eef4fe 0 1px, #8fa8dc 1px 2px); }
.check { height: 27px; flex: none; display: flex; align-items: center; gap: 2px; padding: 0 0 3px 6px; white-space: nowrap; }
.check input { appearance: none; flex: none; position: relative; width: 13px; height: 13px; margin: 0; border: 1px solid #1c5180; background: #fff; }
.check input:checked::after { content: ""; position: absolute; left: 3px; top: 0; width: 5px; height: 8px; border: solid #21a121; border-width: 0 2px 2px 0; transform: rotate(45deg); }

.status { height: 23px; flex: none; display: flex; align-items: center; gap: 5px; padding: 2px 4px; border-top: 1px solid #8f8c80; background: #ece9d8; }
.status span { width: 245px; height: 19px; display: flex; align-items: center; justify-content: center; border: 1px solid #d0cdbc; border-left-color: #c9c6b6; }
.status .lang { width: 175px; }
.status .book { width: 31px; }
.book svg { width: 20px; height: 16px; }

.taskbar { height: 30px; flex: none; display: flex; color: #fff; background: linear-gradient(#1f4fc0 0, #3f8cf3 2px, #2a66e0 6px, #245edb 22px, #1941a5 30px); }
.start { width: 97px; gap: 4px; padding: 0 22px 2px 8px; border-radius: 0 12px 12px 0; box-shadow: inset -3px -2px 4px #1d5a1e, inset 0 2px 2px #7cc47a; background: linear-gradient(#56a856, #3a963a 30%, #379437 75%, #2a752a); font: italic bold 17px/20px "Open Sans", sans-serif; text-shadow: 1px 1px 1px #1c421c; }
.start svg { width: 18px; height: 18px; }
.tasks { flex: 1; display: grid; grid-template-columns: repeat(5, 1fr); gap: 2px; padding: 2px 0 3px 9px; }
.tasks button { min-width: 0; justify-content: flex-start; gap: 4px; padding: 0 9px; border-radius: 3px; box-shadow: inset 1px 1px #6fa5fb, inset -1px -1px #2858c8; background: linear-gradient(#4a8bf8, #3c7ff3 60%, #3674ea); }
.tasks .active { box-shadow: inset 1px 1px 2px #0c2c80; background: #1e52b7; }
.tasks em { font-style: normal; font-weight: bold; color: #ffc27a; }
.more { margin-left: auto; fill: #fff; }
.langbar { display: flex; align-items: center; gap: 6px; padding: 0 13px 0 10px; }
.tray { display: flex; align-items: center; gap: 2px; padding-right: 12px; background: linear-gradient(#0c59b9 0, #1ca5f2 3px, #129bee 20px, #0d7ad0 30px); }
.tray button { margin-left: -9px; }
.tray button svg { width: 18px; height: 18px; }
.tray > svg { width: 16px; height: 16px; }
.tray time { margin-left: 6px; }
```
